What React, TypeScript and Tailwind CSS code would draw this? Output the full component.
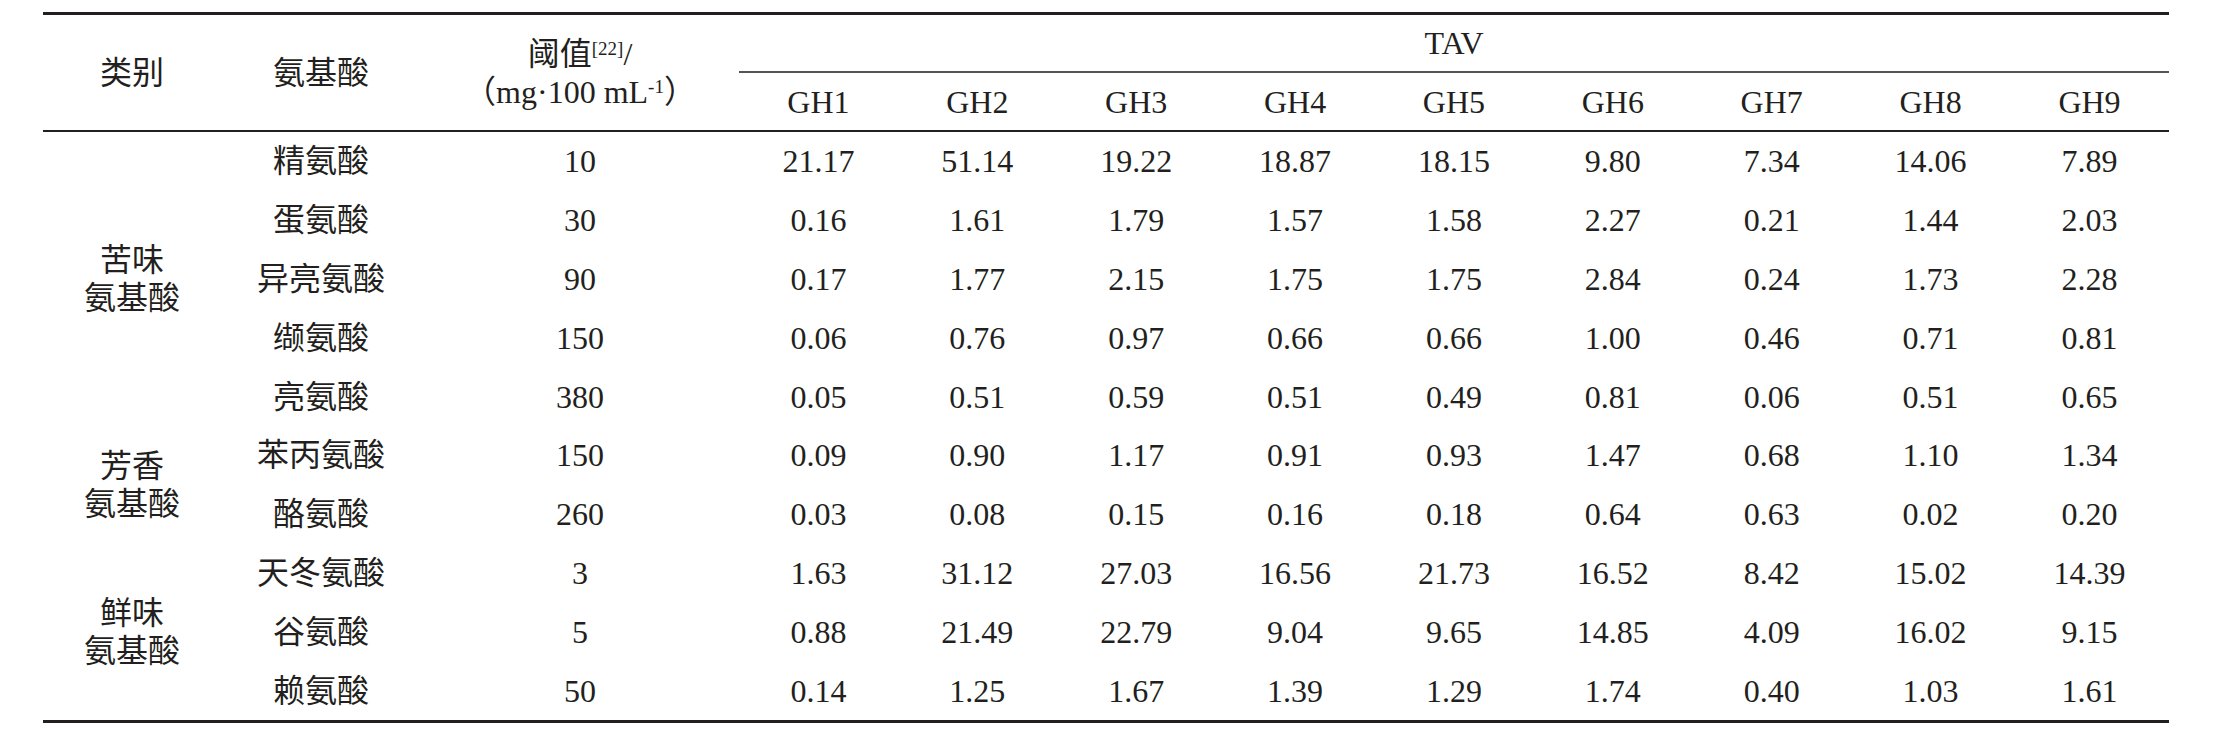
const groups = [
  {
    name: ["苦味", "氨基酸"],
    rows: [
      ["精氨酸", "10", "21.17", "51.14", "19.22", "18.87", "18.15", "9.80", "7.34", "14.06", "7.89"],
      ["蛋氨酸", "30", "0.16", "1.61", "1.79", "1.57", "1.58", "2.27", "0.21", "1.44", "2.03"],
      ["异亮氨酸", "90", "0.17", "1.77", "2.15", "1.75", "1.75", "2.84", "0.24", "1.73", "2.28"],
      ["缬氨酸", "150", "0.06", "0.76", "0.97", "0.66", "0.66", "1.00", "0.46", "0.71", "0.81"],
      ["亮氨酸", "380", "0.05", "0.51", "0.59", "0.51", "0.49", "0.81", "0.06", "0.51", "0.65"],
    ],
  },
  {
    name: ["芳香", "氨基酸"],
    rows: [
      ["苯丙氨酸", "150", "0.09", "0.90", "1.17", "0.91", "0.93", "1.47", "0.68", "1.10", "1.34"],
      ["酪氨酸", "260", "0.03", "0.08", "0.15", "0.16", "0.18", "0.64", "0.63", "0.02", "0.20"],
    ],
  },
  {
    name: ["鲜味", "氨基酸"],
    rows: [
      ["天冬氨酸", "3", "1.63", "31.12", "27.03", "16.56", "21.73", "16.52", "8.42", "15.02", "14.39"],
      ["谷氨酸", "5", "0.88", "21.49", "22.79", "9.04", "9.65", "14.85", "4.09", "16.02", "9.15"],
      ["赖氨酸", "50", "0.14", "1.25", "1.67", "1.39", "1.29", "1.74", "0.40", "1.03", "1.61"],
    ],
  },
];

const samples = ["GH1", "GH2", "GH3", "GH4", "GH5", "GH6", "GH7", "GH8", "GH9"];

export default function App() {
  return (
    <div className="w-[2225px] h-[740px] bg-white pt-[12px] pl-[43px] text-[#231f20] [font-family:'Liberation_Serif','Noto_Sans_CJK_SC',serif]">
      <table className="w-[2126px] table-fixed border-separate border-spacing-0 border-t-[3px] border-b-[3px] border-[#231f20] text-[32px] leading-[38px] text-center font-normal">
        <colgroup>
          <col className="w-[178px]" />
          <col className="w-[200px]" />
          <col className="w-[318px]" />
          {samples.map((s) => (
            <col key={s} />
          ))}
        </colgroup>
        <thead>
          <tr className="h-[58px]">
            <th rowSpan={2} className="p-0 font-normal align-middle border-b-2 border-[#231f20]">
              类别
            </th>
            <th rowSpan={2} className="p-0 font-normal align-middle border-b-2 border-[#231f20]">
              氨基酸
            </th>
            <th rowSpan={2} className="p-0 font-normal align-middle border-b-2 border-[#231f20]">
              <div>
                阈值<sup className="text-[19px]">[22]</sup>/
              </div>
              <div>
                （mg·100 mL<sup className="text-[19px]">-1</sup>）
              </div>
            </th>
            <th colSpan={9} className="p-0 font-normal align-middle border-b-2 border-[#555555]">
              TAV
            </th>
          </tr>
          <tr className="h-[59px]">
            {samples.map((s) => (
              <th key={s} className="p-0 font-normal align-middle border-b-2 border-[#231f20]">
                {s}
              </th>
            ))}
          </tr>
        </thead>
        <tbody>
          {groups.map((g) =>
            g.rows.map((r, i) => (
              <tr key={r[0]} className="h-[58.8px]">
                {i === 0 && (
                  <td rowSpan={g.rows.length} className="p-0 align-middle">
                    <div>{g.name[0]}</div>
                    <div>{g.name[1]}</div>
                  </td>
                )}
                {r.map((c, j) => (
                  <td key={j} className="p-0 align-middle">
                    {c}
                  </td>
                ))}
              </tr>
            ))
          )}
        </tbody>
      </table>
    </div>
  );
}
